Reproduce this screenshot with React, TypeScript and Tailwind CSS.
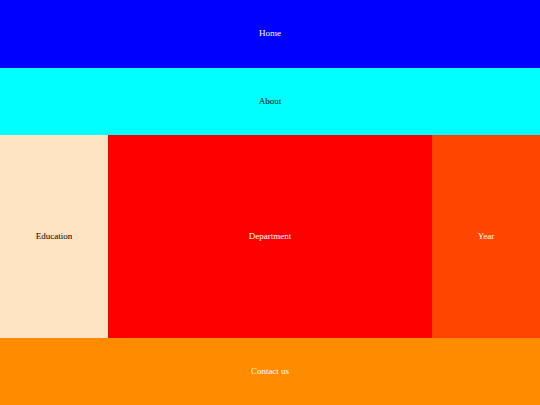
export default function App() {
  return (
    <div className="grid h-[405px] w-[540px] grid-cols-[1fr_3fr_1fr] grid-rows-[1fr_1fr_3fr_1fr] text-center font-['Liberation_Serif',serif] text-[9px]">
      <header className="col-span-3 flex items-center justify-center bg-[#0000ff] text-white">Home</header>
      <nav className="col-span-3 flex items-center justify-center bg-[#00ffff] text-black">About</nav>
      <aside className="flex items-center justify-center bg-[#ffe4c4] text-black">Education</aside>
      <main className="flex items-center justify-center bg-[#ff0000] text-white">Department</main>
      <aside className="flex items-center justify-center bg-[#ff4500] text-white">Year</aside>
      <footer className="col-span-3 flex items-center justify-center bg-[#ff8c00] text-white">Contact us</footer>
    </div>
  );
}
